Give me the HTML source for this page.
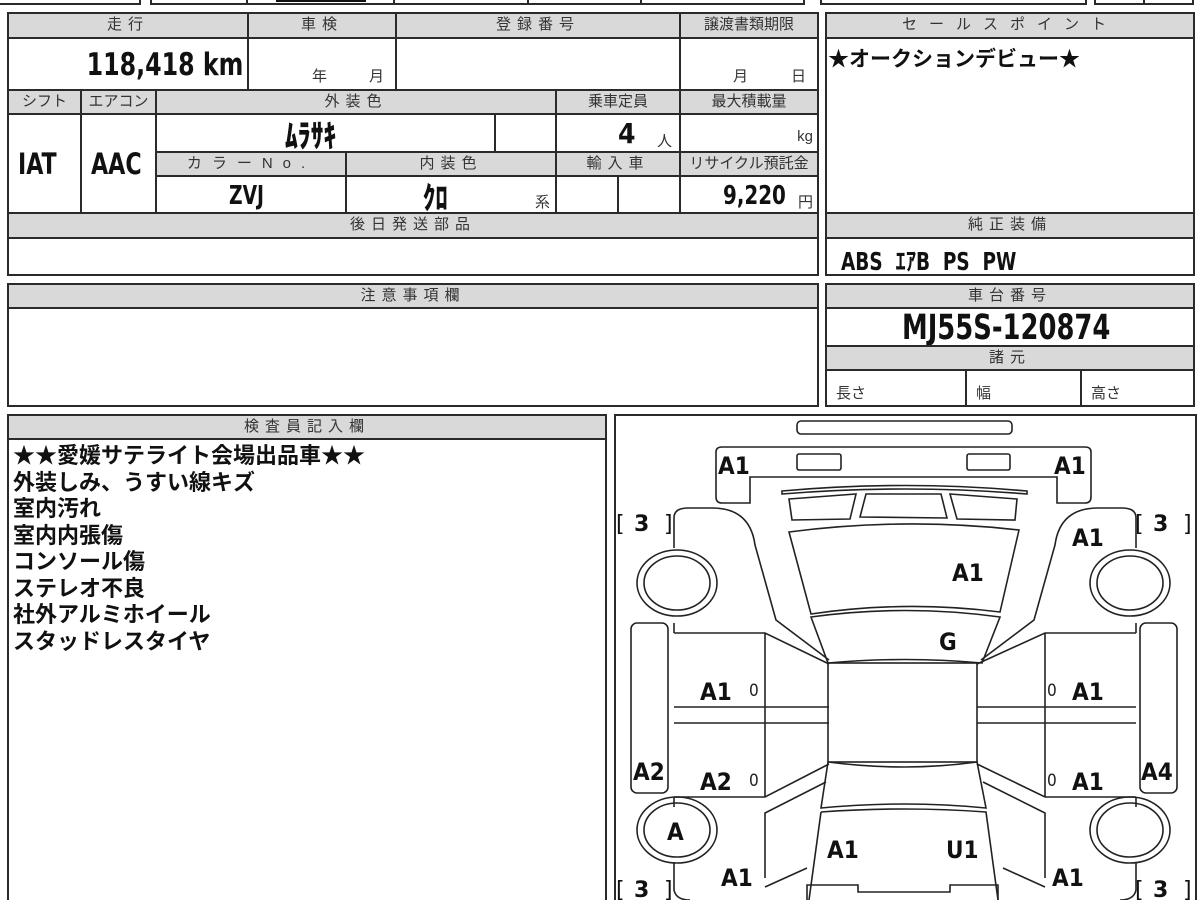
<!DOCTYPE html>
<html style="overflow:hidden;height:900px"><head><meta charset="utf-8"><style>
body{margin:0;width:1200px;height:900px;overflow:hidden;background:#fff;position:relative;font-family:"Liberation Sans","Noto Sans CJK JP",sans-serif;color:#111}
.c{position:absolute;box-sizing:border-box;border:2px solid #2a2a2a;background:#fff}
.h{background:#d9d9d9;text-align:center;font-size:15px;line-height:21px;color:#333;letter-spacing:6px;white-space:nowrap;overflow:hidden}
.n{letter-spacing:0}
.v{font-family:"DejaVu Sans Condensed","DejaVu Sans","Noto Sans CJK JP",sans-serif;font-weight:bold;color:#111;position:absolute;white-space:nowrap}
.s{position:absolute;font-size:15px;color:#333;white-space:nowrap}
.t{font-family:"Noto Sans CJK JP",sans-serif;font-weight:bold;font-size:22px;line-height:26.5px;position:absolute;left:4px;top:4px;white-space:nowrap}
</style></head><body>
<div class="c" style="left:-2px;top:-20px;width:143px;height:25px"></div>
<div class="c" style="left:150px;top:-20px;width:100px;height:25px"></div>
<div class="c" style="left:246px;top:-20px;width:151px;height:25px"><div style="position:absolute;left:28px;top:14px;width:90px;height:6px;background:#111"></div></div>
<div class="c" style="left:393px;top:-20px;width:136px;height:25px"></div>
<div class="c" style="left:527px;top:-20px;width:115px;height:25px"></div>
<div class="c" style="left:640px;top:-20px;width:165px;height:25px"></div>
<div class="c" style="left:820px;top:-20px;width:267px;height:25px"></div>
<div class="c" style="left:1094px;top:-20px;width:51px;height:25px"></div>
<div class="c" style="left:1143px;top:-20px;width:51px;height:25px"></div>

<div class="c h" style="left:7px;top:12px;width:242px;height:27px">走行</div>
<div class="c h" style="left:247px;top:12px;width:150px;height:27px">車検</div>
<div class="c h" style="left:395px;top:12px;width:286px;height:27px">登録番号</div>
<div class="c h n" style="left:679px;top:12px;width:140px;height:27px">譲渡書類期限</div>
<div class="c" style="left:7px;top:37px;width:242px;height:54px"><span class="v" style="right:4px;top:8px;font-size:31px;transform:scaleX(.85);transform-origin:right">118,418 km</span></div>
<div class="c" style="left:247px;top:37px;width:150px;height:54px"><span class="s" style="left:63px;top:26px">年</span><span class="s" style="left:120px;top:26px">月</span></div>
<div class="c" style="left:395px;top:37px;width:286px;height:54px"></div>
<div class="c" style="left:679px;top:37px;width:140px;height:54px"><span class="s" style="left:52px;top:26px">月</span><span class="s" style="left:110px;top:26px">日</span></div>
<div class="c h n" style="left:7px;top:89px;width:75px;height:26px">シフト</div>
<div class="c h n" style="left:80px;top:89px;width:77px;height:26px">エアコン</div>
<div class="c h" style="left:155px;top:89px;width:402px;height:26px">外装色</div>
<div class="c h n" style="left:555px;top:89px;width:126px;height:26px">乗車定員</div>
<div class="c h n" style="left:679px;top:89px;width:140px;height:26px">最大積載量</div>
<div class="c" style="left:7px;top:113px;width:75px;height:101px"><span class="v" style="left:9px;top:32px;font-size:29px;transform:scaleX(.85);transform-origin:left">IAT</span></div>
<div class="c" style="left:80px;top:113px;width:77px;height:101px"><span class="v" style="left:9px;top:32px;font-size:29px;transform:scaleX(.85);transform-origin:left">AAC</span></div>
<div class="c" style="left:155px;top:113px;width:341px;height:40px"><span class="v" style="left:128px;top:-4px;font-size:32px;font-family:'Noto Sans CJK JP',sans-serif;font-weight:900;transform:scaleX(.8);transform-origin:left">ﾑﾗｻｷ</span></div>
<div class="c" style="left:494px;top:113px;width:63px;height:40px"></div>
<div class="c" style="left:555px;top:113px;width:126px;height:40px"><span class="v" style="left:61px;top:2px;font-size:28px">4</span><span class="s" style="left:100px;top:15px">人</span></div>
<div class="c" style="left:679px;top:113px;width:140px;height:40px"><span class="s" style="right:4px;top:13px">kg</span></div>
<div class="c h" style="left:155px;top:151px;width:192px;height:26px;letter-spacing:10px">カラーNo.</div>
<div class="c h" style="left:345px;top:151px;width:212px;height:26px">内装色</div>
<div class="c h" style="left:555px;top:151px;width:126px;height:26px">輸入車</div>
<div class="c h n" style="left:679px;top:151px;width:140px;height:26px">リサイクル預託金</div>
<div class="c" style="left:155px;top:175px;width:192px;height:39px"><span class="v" style="left:72px;top:4px;font-size:26px;transform:scaleX(.8);transform-origin:left">ZVJ</span></div>
<div class="c" style="left:345px;top:175px;width:212px;height:39px"><span class="v" style="left:76px;top:-4px;font-size:31px;font-family:'Noto Sans CJK JP',sans-serif;font-weight:900;transform:scaleX(.8);transform-origin:left">ｸﾛ</span><span class="s" style="left:188px;top:14px">系</span></div>
<div class="c" style="left:555px;top:175px;width:64px;height:39px"></div>
<div class="c" style="left:617px;top:175px;width:64px;height:39px"></div>
<div class="c" style="left:679px;top:175px;width:140px;height:39px"><span class="v" style="left:42px;top:4px;font-size:26px;transform:scaleX(.85);transform-origin:left">9,220</span><span class="s" style="right:4px;top:14px">円</span></div>
<div class="c h" style="left:7px;top:212px;width:812px;height:27px">後日発送部品</div>
<div class="c" style="left:7px;top:237px;width:812px;height:39px"></div>

<div class="c h" style="left:825px;top:12px;width:370px;height:27px;letter-spacing:12px">セールスポイント</div>
<div class="c" style="left:825px;top:37px;width:370px;height:177px"><div class="t" style="left:1px;top:6px;font-size:21px">★オークションデビュー★</div></div>
<div class="c h" style="left:825px;top:212px;width:370px;height:27px">純正装備</div>
<div class="c" style="left:825px;top:237px;width:370px;height:39px"><span class="v" style="left:14px;top:3px;font-size:25px;transform:scaleX(.82);transform-origin:left">ABS&nbsp; ｴｱB&nbsp; PS&nbsp; PW</span></div>

<div class="c h" style="left:7px;top:283px;width:812px;height:26px">注意事項欄</div>
<div class="c" style="left:7px;top:307px;width:812px;height:100px"></div>
<div class="c h" style="left:825px;top:283px;width:370px;height:26px">車台番号</div>
<div class="c" style="left:825px;top:307px;width:370px;height:40px"><span class="v" style="left:75px;top:-1px;font-size:35px;transform:scaleX(.82);transform-origin:left">MJ55S-120874</span></div>
<div class="c h" style="left:825px;top:345px;width:370px;height:26px">諸元</div>
<div class="c" style="left:825px;top:369px;width:142px;height:38px"><span class="s" style="left:9px;top:11px">長さ</span></div>
<div class="c" style="left:965px;top:369px;width:117px;height:38px"><span class="s" style="left:9px;top:11px">幅</span></div>
<div class="c" style="left:1080px;top:369px;width:115px;height:38px"><span class="s" style="left:9px;top:11px">高さ</span></div>

<div class="c h" style="left:7px;top:414px;width:600px;height:26px">検査員記入欄</div>
<div class="c" style="left:7px;top:438px;width:600px;height:462px;border-bottom:none"><div class="t" style="top:1px">★★愛媛サテライト会場出品車★★<br>外装しみ、うすい線キズ<br>室内汚れ<br>室内内張傷<br>コンソール傷<br>ステレオ不良<br>社外アルミホイール<br>スタッドレスタイヤ</div></div>

<div class="c" style="left:614px;top:414px;width:583px;height:486px;border-bottom:none"></div>
<svg style="position:absolute;left:0;top:0" width="1200" height="900" viewBox="0 0 1200 900" fill="none" stroke="#222" stroke-width="1.6">
<rect x="797" y="421" width="215" height="13" rx="4"/>
<path d="M722,503 Q716,503 716,497 V452 Q716,447 722,447 H1085 Q1091,447 1091,452 V497 Q1091,503 1085,503 H1057 V477 H750 V503 Z"/>
<rect x="797" y="454" width="44" height="16" rx="2"/>
<rect x="967" y="454" width="43" height="16" rx="2"/>
<path d="M782,491 Q905,480 1027,491 L1027,494 Q905,484 782,494 Z"/>
<path d="M789,499 L856,494 L850,519 L792,520 Z"/>
<path d="M866,494 L941,494 L947,518 L860,517 Z"/>
<path d="M950,494 L1017,499 L1015,520 L957,519 Z"/>
<path d="M789,532 Q905,517 1019,530 L1000,612 Q905,600 811,614 Z"/>
<path d="M811,617 Q905,604 1000,617 L982,663 Q905,656 828,663 Z"/>
<rect x="828" y="663" width="149" height="99"/>
<path d="M828,762 Q905,772 977,762 L986,808 Q905,800 821,808 Z"/>
<path d="M821,812 Q905,806 986,812 L998,900 M809,900 L821,812"/>
<path d="M674,548 V518 Q674,508 688,508 H712 Q750,508 755,545 L776,620 L829,660"/>
<path d="M1136,548 V518 Q1136,508 1122,508 H1098 Q1060,508 1055,545 L1034,620 L981,660"/>
<path d="M674,633 H765 L829,664 M674,707 H829 M674,723 H829 M674,797 H765 L829,764 M765,633 V797"/>
<path d="M1136,633 H1045 L977,664 M1136,707 H977 M1136,723 H977 M1136,797 H1045 L977,764 M1045,633 V797"/>
<path d="M674,633 V623 M674,797 V807 M1136,633 V623 M1136,797 V807"/>
<path d="M765,878 V813 L826,782 M765,887 L807,868 M674,862 V890 Q676,900 690,900"/>
<path d="M1045,878 V813 L983,782 M1045,887 L1003,868 M1136,862 V890 Q1134,900 1120,900"/>
<path d="M807,900 V885 H858 V892 H950 V885 H998 V900"/>
<rect x="631" y="623" width="37" height="170" rx="6"/>
<rect x="1140" y="623" width="37" height="170" rx="6"/>
<ellipse cx="677" cy="583" rx="40" ry="33"/><ellipse cx="677" cy="583" rx="33" ry="27"/>
<ellipse cx="1130" cy="583" rx="40" ry="33"/><ellipse cx="1130" cy="583" rx="33" ry="27"/>
<ellipse cx="677" cy="830" rx="40" ry="33"/><ellipse cx="677" cy="830" rx="33" ry="27"/>
<ellipse cx="1130" cy="830" rx="40" ry="33"/><ellipse cx="1130" cy="830" rx="33" ry="27"/>
<g fill="#111" stroke="none" font-family="DejaVu Sans Condensed, DejaVu Sans, sans-serif" font-weight="bold" font-size="24">
<text x="718" y="474">A1</text><text x="1054" y="474">A1</text>
<text x="1072" y="546">A1</text><text x="952" y="581">A1</text><text x="939" y="650">G</text>
<text x="700" y="700">A1</text><text x="1072" y="700">A1</text>
<text x="633" y="780">A2</text><text x="700" y="790">A2</text><text x="1072" y="790">A1</text><text x="1141" y="780">A4</text>
<text x="667" y="840">A</text><text x="827" y="858">A1</text><text x="946" y="858">U1</text>
<text x="721" y="886">A1</text><text x="1052" y="886">A1</text>
</g>
<g fill="#222" stroke="none" font-family="DejaVu Sans Condensed, DejaVu Sans, sans-serif" font-size="17">
<text x="749" y="696">0</text><text x="1047" y="696">0</text><text x="749" y="786">0</text><text x="1047" y="786">0</text>
</g>
<g fill="#111" stroke="none" font-family="DejaVu Sans, sans-serif" font-size="22">
<text x="616" y="531">[</text><text x="634" y="531" font-weight="bold">3</text><text x="664" y="531">]</text>
<text x="1135" y="531">[</text><text x="1153" y="531" font-weight="bold">3</text><text x="1183" y="531">]</text>
<text x="616" y="897">[</text><text x="634" y="897" font-weight="bold">3</text><text x="664" y="897">]</text>
<text x="1135" y="897">[</text><text x="1153" y="897" font-weight="bold">3</text><text x="1183" y="897">]</text>
</g>
</svg>
</body></html>
